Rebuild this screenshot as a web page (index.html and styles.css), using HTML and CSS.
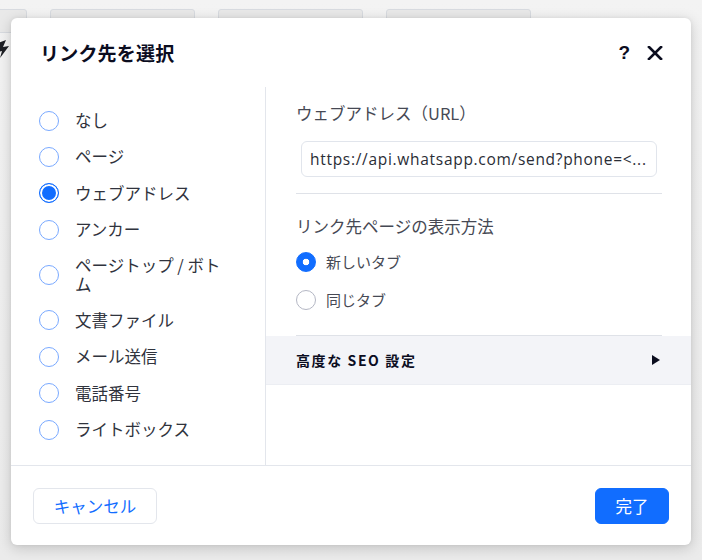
FILE: index.html
```html
<!DOCTYPE html>
<html lang="ja">
<head>
<meta charset="utf-8">
<link rel="stylesheet" href="styles.css">
</head>
<body>
<div class="backdrop">
  <div class="tabs">
    <div class="tab tab-cut"></div>
    <div class="tab"></div>
    <div class="tab"></div>
    <div class="tab"></div>
  </div>
  <svg class="bolt" width="10" height="20" viewBox="0 0 10 20"><path d="M-2 3 L6 0 L3 7 L9 6 L0 18 L2 11 L-3 12 Z" fill="#1d1f24"/></svg>
</div>

<div class="dialog">
  <header class="dlg-head">
    <h1 class="title">リンク先を選択</h1>
    <div class="head-actions">
      <span class="help">?</span>
      <svg class="close" width="16" height="14" viewBox="0 0 16 14"><path d="M2 1 L14 13 M14 1 L2 13" stroke="#0b0d1f" stroke-width="2.6" stroke-linecap="square"/></svg>
    </div>
  </header>

  <div class="dlg-body">
    <ul class="types">
      <li class="type"><span class="radio"></span><span class="type-label">なし</span></li>
      <li class="type"><span class="radio"></span><span class="type-label">ページ</span></li>
      <li class="type"><span class="radio radio-on"></span><span class="type-label">ウェブアドレス</span></li>
      <li class="type"><span class="radio"></span><span class="type-label">アンカー</span></li>
      <li class="type"><span class="radio"></span><span class="type-label">ページトップ / ボトム</span></li>
      <li class="type"><span class="radio"></span><span class="type-label">文書ファイル</span></li>
      <li class="type"><span class="radio"></span><span class="type-label">メール送信</span></li>
      <li class="type"><span class="radio"></span><span class="type-label">電話番号</span></li>
      <li class="type"><span class="radio"></span><span class="type-label">ライトボックス</span></li>
    </ul>

    <div class="settings">
      <section class="sec sec-url">
        <div class="label">ウェブアドレス（URL）</div>
        <div class="input">https://api.whatsapp.com/send?phone=&lt;...</div>
      </section>
      <section class="sec sec-target">
        <div class="label">リンク先ページの表示方法</div>
        <div class="opts">
          <div class="opt"><span class="dot dot-on"></span><span>新しいタブ</span></div>
          <div class="opt"><span class="dot"></span><span>同じタブ</span></div>
        </div>
      </section>
      <div class="seo">
        <span class="seo-label">高度な SEO 設定</span>
        <svg class="tri" width="8" height="10" viewBox="0 0 8 10"><path d="M0 0 L8 5 L0 10 Z" fill="#0b0d1f"/></svg>
      </div>
    </div>
  </div>

  <footer class="dlg-foot">
    <button class="btn btn-cancel">キャンセル</button>
    <button class="btn btn-done">完了</button>
  </footer>
</div>
</body>
</html>
```

FILE: styles.css
```css
* { box-sizing: border-box; }
html, body { margin: 0; padding: 0; }
body {
  width: 702px;
  height: 560px;
  overflow: hidden;
  background: #ececec;
  font-family: "Noto Sans CJK JP", "Noto Sans", sans-serif;
  position: relative;
}
.backdrop {
  height: 560px;
  background: linear-gradient(#f3f3f3, #ebebeb);
  position: relative;
}
.tabs {
  display: flex;
  gap: 23px;
  padding-top: 9px;
  margin-left: -118px;
}
.tab {
  flex: none;
  width: 145px;
  height: 24px;
  background: #e9e9e9;
  border: 1px solid #d8dbe0;
  border-radius: 3px;
}
.bolt {
  position: absolute;
  left: 0;
  top: 40px;
}

.dialog {
  position: absolute;
  left: 11px;
  top: 18px;
  width: 680px;
  height: 527px;
  background: #fff;
  border-radius: 6px;
  box-shadow: 0 3px 14px rgba(0, 0, 0, 0.18), 0 0 4px rgba(0, 0, 0, 0.06);
  display: flex;
  flex-direction: column;
}
.dlg-head {
  height: 69px;
  flex: none;
  display: flex;
  align-items: center;
  justify-content: space-between;
  padding: 0 28px 0 29px;
}
.title {
  margin: 0;
  font-size: 19px;
  font-weight: 700;
  color: #0b0d1f;
  letter-spacing: 0.2px;
}
.head-actions {
  display: flex;
  align-items: center;
  gap: 17px;
}
.help {
  font-family: "Liberation Sans", sans-serif;
  font-size: 19px;
  line-height: 20px;
  font-weight: 700;
  color: #0b0d1f;
}
.close { display: block; }

.dlg-body {
  flex: 1;
  display: flex;
}
.types {
  flex: none;
  list-style: none;
  margin: 0;
  padding: 21px 40px 0 28px;
  width: 255px;
  border-right: 1px solid #e3e6ec;
  display: flex;
  flex-direction: column;
  gap: 11.4px;
}
.type {
  display: flex;
  align-items: center;
  gap: 16px;
  min-height: 24px;
  padding: 2.5px 0;
  font-size: 16.5px;
  line-height: 19px;
  color: #30333d;
}
.type-label { max-width: 150px; }
.radio {
  flex: none;
  width: 20px;
  height: 20px;
  border-radius: 50%;
  border: 1px solid #79a9ff;
  background: #fff;
}
.radio-on {
  border-color: #116dff;
  background: #116dff;
  box-shadow: inset 0 0 0 2px #fff;
}

.settings {
  flex: 1;
  min-width: 0;
  display: flex;
  flex-direction: column;
}
.sec {
  margin: 0 29px 0 30px;
  border-bottom: 1px solid #dfe2e8;
}
.sec-url { padding: 16px 0 16px; }
.label {
  font-size: 16.5px;
  line-height: 20px;
  color: #464954;
}
.input {
  margin: 18px 5px 0;
  height: 36px;
  border: 1px solid #e1e5ec;
  border-radius: 6px;
  padding: 0 8px;
  font-family: "Open Sans", sans-serif;
  font-size: 15.5px;
  letter-spacing: 0.7px;
  line-height: 34px;
  color: #2a2d36;
  white-space: nowrap;
  overflow: hidden;
}
.sec-target { padding: 22px 0 25px; }
.opts {
  display: flex;
  flex-direction: column;
  gap: 18px;
  margin-top: 16px;
}
.opt {
  display: flex;
  align-items: center;
  gap: 10px;
  font-size: 15px;
  line-height: 20px;
  color: #464954;
}
.dot {
  flex: none;
  width: 20px;
  height: 20px;
  border-radius: 50%;
  border: 1px solid #b4b7c4;
  background: #fff;
}
.dot-on {
  border-color: #116dff;
  background: radial-gradient(circle, #fff 0 3px, #116dff 3.6px);
}
.seo {
  height: 49px;
  background: #f3f4f8;
  border-bottom: 1px solid #eceef3;
  display: flex;
  align-items: center;
  justify-content: space-between;
  padding: 0 29px 0 30px;
}
.seo-label {
  font-size: 14px;
  font-weight: 700;
  letter-spacing: 1.6px;
  color: #0b0d1f;
}
.tri { display: block; margin-right: 2px; }

.dlg-foot {
  height: 80px;
  flex: none;
  border-top: 1px solid #e3e6ec;
  display: flex;
  align-items: center;
  justify-content: space-between;
  padding: 0 22px;
}
.btn {
  height: 36px;
  padding: 0;
  border-radius: 6px;
  font-family: "Noto Sans CJK JP", sans-serif;
  font-size: 16.5px;
  white-space: nowrap;
}
.btn-cancel {
  width: 124px;
  background: #fff;
  border: 1px solid #e3e6ec;
  color: #116dff;
}
.btn-done {
  width: 74px;
  background: #116dff;
  border: 1px solid #116dff;
  color: #fff;
}
```
